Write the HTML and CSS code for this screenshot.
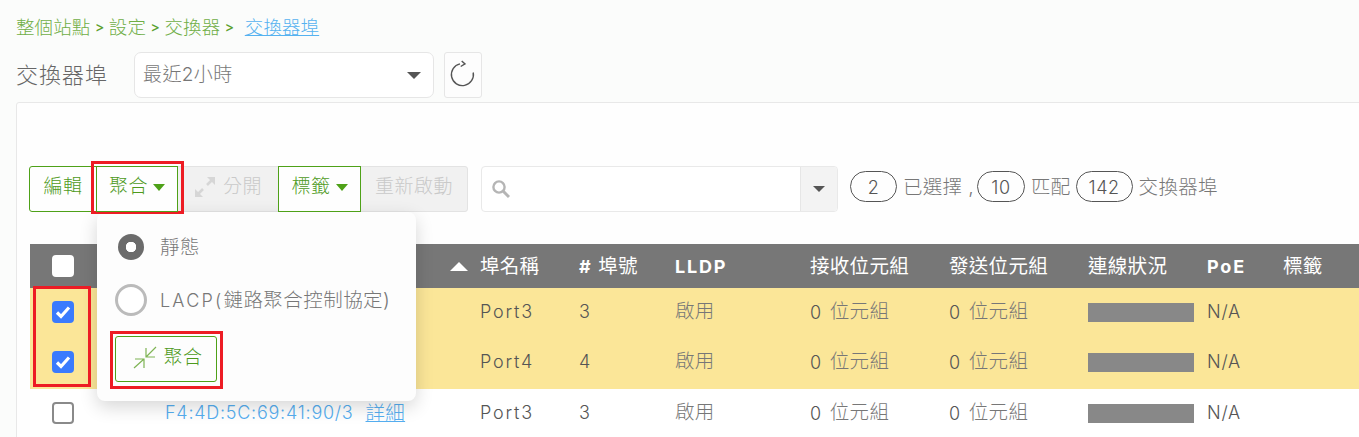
FILE: index.html
```html
<!DOCTYPE html>
<html lang="zh-Hant">
<head>
<meta charset="utf-8">
<title>交換器埠</title>
<link rel="stylesheet" href="styles.css">
</head>
<body>
<div class="page">
  <nav class="crumbs">
    <span>整個站點</span><b>&gt;</b><span>設定</span><b>&gt;</b><span>交換器</span><b>&gt;</b><a class="crumb-now">交換器埠</a>
  </nav>
  <div class="titlebar">
    <h1 class="title">交換器埠</h1>
    <div class="select"><span>最近2小時</span><i class="caret dark"></i></div>
    <button class="refresh">
      <svg width="28" height="30" viewBox="0 0 28 30"><path d="M11 3.9A11 11 0 1 0 24.2 12.5" fill="none" stroke="#555" stroke-width="1.4"/><path d="M12.7 .9 16 3.9 11.7 6.5" fill="none" stroke="#555" stroke-width="1.4"/></svg>
    </button>
  </div>
  <section class="panel">
    <div class="toolbar">
      <div class="btns">
        <button class="btn first">編輯</button>
        <button class="btn">聚合<i class="caret green"></i></button>
        <button class="btn off">
          <svg width="22" height="22" viewBox="0 0 22 22"><path d="M3 19 9 13" stroke="#d6d6d6" stroke-width="2.6"/><path d="M1 13 9 21H1zM13 1h8v8z" fill="#d6d6d6"/><path d="M19 3 13 9" stroke="#d6d6d6" stroke-width="2.6"/></svg>分開
        </button>
        <button class="btn">標籤<i class="caret green"></i></button>
        <button class="btn off last">重新啟動</button>
      </div>
      <div class="search">
        <svg width="20" height="20" viewBox="0 0 20 20"><circle cx="8" cy="8" r="5.6" fill="none" stroke="#b5b5b5" stroke-width="2.4"/><path d="M12 12l6 6" stroke="#b5b5b5" stroke-width="3"/></svg>
        <span class="addon"><i class="caret dark small"></i></span>
      </div>
      <div class="counts">
        <span class="pill p1">2</span><span>已選擇 ,</span>
        <span class="pill p2">10</span><span>匹配</span>
        <span class="pill p3">142</span><span>交換器埠</span>
      </div>
    </div>
    <div class="table">
      <div class="row head">
        <span class="cb"><i class="box white"></i></span>
        <span class="sortcol"><i class="sort"></i></span>
        <span>埠名稱</span>
        <span><b>#</b> 埠號</span>
        <span><b>LLDP</b></span>
        <span>接收位元組</span>
        <span>發送位元組</span>
        <span>連線狀況</span>
        <span><b>PoE</b></span>
        <span>標籤</span>
      </div>
      <div class="row sel">
        <span class="cb"><i class="box on"><svg width="16" height="14" viewBox="0 0 16 14"><path d="M2 7.5 6 11.5 14 2.5" fill="none" stroke="#fff" stroke-width="3.2"/></svg></i></span>
        <span class="mac"><a>F4:4D:5C:69:41:90/3</a><a class="link">詳細</a></span>
        <span>Port3</span><span>3</span><span class="cjk">啟用</span>
        <span>0 <em>位元組</em></span><span>0 <em>位元組</em></span><span><i class="bar"></i></span><span class="na">N/A</span><span></span>
      </div>
      <div class="row sel">
        <span class="cb"><i class="box on"><svg width="16" height="14" viewBox="0 0 16 14"><path d="M2 7.5 6 11.5 14 2.5" fill="none" stroke="#fff" stroke-width="3.2"/></svg></i></span>
        <span class="mac"><a>F4:4D:5C:69:41:90/4</a><a class="link">詳細</a></span>
        <span>Port4</span><span>4</span><span class="cjk">啟用</span>
        <span>0 <em>位元組</em></span><span>0 <em>位元組</em></span><span><i class="bar"></i></span><span class="na">N/A</span><span></span>
      </div>
      <div class="row">
        <span class="cb"><i class="box"></i></span>
        <span class="mac"><a>F4:4D:5C:69:41:90/3</a><a class="link">詳細</a></span>
        <span>Port3</span><span>3</span><span class="cjk">啟用</span>
        <span>0 <em>位元組</em></span><span>0 <em>位元組</em></span><span><i class="bar"></i></span><span class="na">N/A</span><span></span>
      </div>
    </div>
  </section>

  <div class="menu">
    <label class="opt"><i class="radio checked"></i><span>靜態</span></label>
    <label class="opt second"><i class="radio"></i><span><span class="lat">LACP(</span>鏈路聚合控制協定)</span></label>
    <button class="apply">
      <svg width="24" height="24" viewBox="0 0 24 24"><path d="M23 1 13 11M13 2v9h9M1 22l10-9M2 13h9v9" fill="none" stroke="#7fb455" stroke-width="1.2"/></svg>聚合
    </button>
  </div>

  <i class="mark m-btn"></i>
  <i class="mark m-check"></i>
  <i class="mark m-apply"></i>
</div>
</body>
</html>
```
FILE: styles.css
```css
* { box-sizing: border-box; }
html, body { margin: 0; height: 100%; overflow: hidden; }
body {
  background: #fbfcfb;
  color: #555;
  font-family: Inter, "Noto Sans CJK TC", sans-serif;
  font-size: 18px;
  line-height: 22px;
  font-weight: 300;
}
i, em { font-style: normal; }
button { font: inherit; padding: 0; background: none; }

.page { position: relative; width: 1359px; height: 437px; overflow: hidden; padding: 16px 0 0 16px; }

.crumbs { display: flex; align-items: center; height: 22px; color: #6fae45; font-size: 18.5px; letter-spacing: .1px; }
.crumbs b { font-size: 14px; font-weight: 500; color: #5aa02c; margin: 0 4.5px; }
.crumb-now { color: #55b2f0; text-decoration: underline; margin-left: 6px; }

.titlebar { display: flex; align-items: center; height: 46px; margin-top: 14px; }
.title { margin: 0; width: 118px; font-size: 22px; line-height: 26px; font-weight: 300; letter-spacing: 1px; color: #666; }
.select { display: flex; align-items: center; justify-content: space-between; width: 300px; height: 46px; padding: 0 12px 0 8px; background: #fff; border: 1px solid #e6e6e6; border-radius: 7px; color: #777; font-size: 19px; letter-spacing: .4px; }
.refresh { width: 38px; height: 46px; margin-left: 10px; background: #fdfdfd; border: 1px solid #e6e6e6; border-radius: 3px; display: flex; align-items: center; justify-content: center; }

.caret { display: inline-block; width: 0; height: 0; border-style: solid; border-width: 7px 7px 0; border-color: #555 transparent transparent; }
.caret.green { border-top-color: #4ea118; margin-left: 2px; border-width: 7px 6.5px 0; }
.caret.small { border-width: 6px 6px 0; }

.panel { margin-top: 4px; width: 1400px; height: 400px; background: #fefefe; border: 1px solid #e8e8e8; border-radius: 3px; padding: 63px 0 0 13px; }

.toolbar { display: flex; align-items: center; height: 46px; }
.btns { display: flex; height: 46px; width: 439px; margin-left: -1px; }
.btn { display: flex; align-items: center; justify-content: center; gap: 3px; height: 46px; padding-bottom: 4px; border: 1px solid #4ea118; background: #fefefe; color: #4e9a1c; font-size: 19px; font-weight: 300; letter-spacing: .5px; width: 82px; margin-left: -1px; }
.btn.first { width: 68px; margin-left: 0; border-radius: 3px 0 0 3px; }
.btn:nth-child(4) { width: 83px; }
.btn.off { background: #f1f1f1; border-color: #e3e3e3; color: #c9c9c9; width: 102px; gap: 7px; }
.btn.off.last { width: 108px; border-radius: 0 3px 3px 0; }
.btn:nth-child(2), .btn:nth-child(4) { position: relative; z-index: 1; }

.search { display: flex; align-items: center; justify-content: space-between; width: 357px; height: 46px; margin-left: 13px; padding-left: 9px; background: #fff; border: 1px solid #e9e9e9; border-radius: 4px; }
.addon { display: flex; align-items: center; justify-content: center; width: 37px; height: 44px; background: #f3f3f3; border-left: 1px solid #e6e6e6; border-radius: 0 4px 4px 0; }

.counts { display: flex; align-items: center; margin-left: 12px; padding-bottom: 5px; color: #777; font-size: 19.5px; letter-spacing: .3px; white-space: nowrap; }
.pill { display: flex; align-items: center; justify-content: center; height: 31px; padding-top: 2px; margin-right: 6px; border: 1px solid #555; border-radius: 16px; color: #555; letter-spacing: .6px; font-size: 18px; }
.pill.p1 { width: 47px; }
.pill.p2 { width: 48px; margin-left: 3px; }
.pill.p3 { width: 57px; margin-left: 5px; }

.table { margin-top: 32px; }
.row { display: grid; grid-template-columns: 135px 315px 99px 96px 135px 139px 139px 119px 76px 1fr; align-items: center; height: 50px; padding-bottom: 3px; background: #fff; color: #555; letter-spacing: 1.8px; }
.row.sel { background: #fbe698; }
.row.sel + .row.sel { height: 51px; padding-bottom: 4px; }
.row.head { height: 44px; padding-bottom: 0; background: #777; color: #fff; font-weight: 400; font-size: 19.5px; letter-spacing: .3px; }
.row.head b { font-weight: 700; font-size: 18px; letter-spacing: 1.8px; }
.row em { color: #777; vertical-align: 1px; font-size: 19.5px; letter-spacing: .3px; }
.row .cjk { color: #777; padding-bottom: 1px; font-size: 19.5px; letter-spacing: .3px; }
.row .na { letter-spacing: .8px; }
.cb { display: flex; padding-left: 22px; }
.box { display: flex; align-items: center; justify-content: center; width: 22px; height: 22px; border: 2px solid #8a8a8a; border-radius: 4px; background: #fff; }
.box.white { border-color: #fff; }
.box.on { background: #3b7bfd; border-color: #3b7bfd; }
.sortcol { display: flex; justify-content: flex-end; padding-right: 12px; }
.sort { width: 0; height: 0; border-style: solid; border-width: 0 9px 9px; border-color: transparent transparent #fff; }
.mac { display: flex; gap: 12px; color: #55aef0; letter-spacing: .75px; }
.link { text-decoration: underline; font-size: 19.5px; letter-spacing: .3px; }
.bar { display: block; width: 106px; height: 19px; margin-top: 2px; background: #888; }

.menu { position: absolute; left: 97px; top: 212px; width: 319px; height: 189px; background: #fdfdfd; border-radius: 8px; box-shadow: 0 6px 18px rgba(0,0,0,.16); padding: 0 18px; font-size: 19.5px; color: #777; letter-spacing: .45px; }
.lat { font-size: 18px; letter-spacing: 2.2px; }
.opt { display: flex; align-items: center; height: 30px; margin-top: 20px; }
.opt.second { margin-top: 23px; }
.radio { flex: none; width: 26px; height: 26px; margin-right: 16px; margin-left: 3px; background: radial-gradient(circle, #fff 0 5px, #6b6b6b 5.5px); border-radius: 50%; }
.opt.second .radio { width: 32px; height: 32px; margin: 0 13px 0 0; background: #fff; border: 3px solid #bbb; }
.apply { display: flex; align-items: center; justify-content: center; gap: 6px; width: 102px; height: 46px; margin-top: 21px; padding: 0 0 3px 4px; border: 1px solid #4ea118; border-radius: 3px; color: #4e9a1c; background: #fdfdfd; font-size: 19px; font-weight: 300; letter-spacing: .5px; }

.mark { position: absolute; border: 3px solid #ed1c24; }
.m-btn { left: 91px; top: 161px; width: 93px; height: 53px; }
.m-check { left: 33px; top: 286px; width: 58px; height: 101px; }
.m-apply { left: 110px; top: 331px; width: 113px; height: 58px; }
```
